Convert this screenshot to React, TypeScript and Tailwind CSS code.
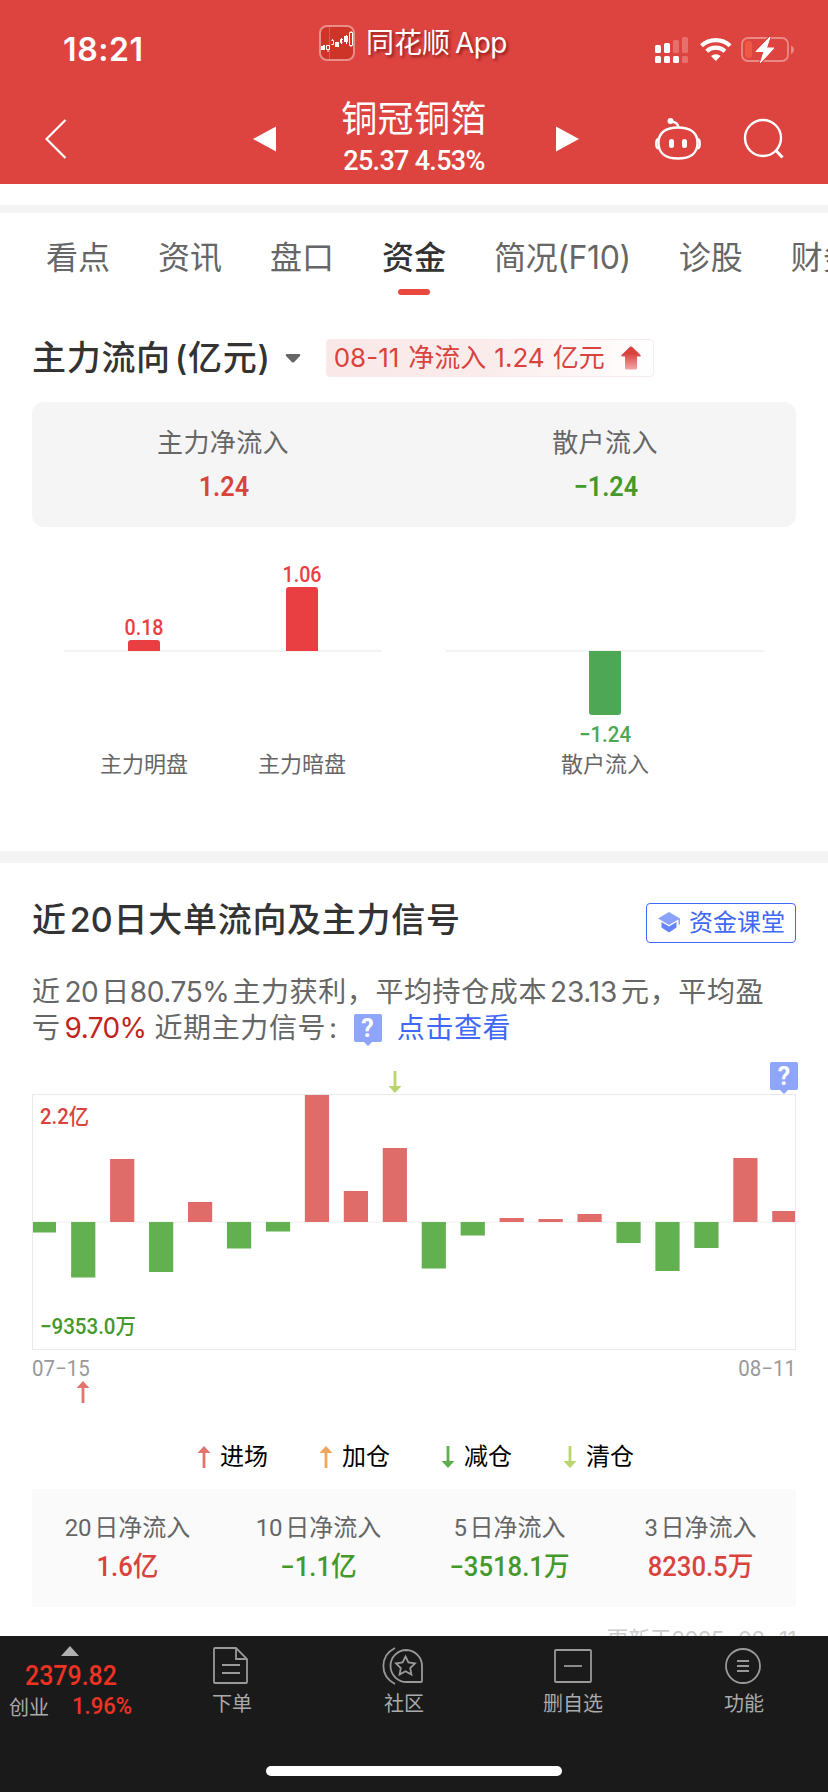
import { useState } from "react";

const din = "font-['Roboto','Noto_Sans_CJK_SC',sans-serif]";

const tabs = ["看点", "资讯", "盘口", "资金", "简况(F10)", "诊股", "财务"];

// net flow per trading day, in chart pixels
const flows = [-10.5, -55.5, 63, -50, 20, -26.5, -9.5, 127, 31, 74, -46.5, -13.5, 4, 3, 8, -21, -49, -26, 64, 11];

const legend = [
  { label: "进场", color: "#e2766f", up: true },
  { label: "加仓", color: "#f2a65a", up: true },
  { label: "减仓", color: "#5fae4d", up: false },
  { label: "清仓", color: "#b9d56b", up: false },
];

const totals = [
  { label: "20", value: "1.6亿", up: true },
  { label: "10", value: "−1.1亿", up: false },
  { label: "5", value: "−3518.1万", up: false },
  { label: "3", value: "8230.5万", up: true },
];

const Arrow = ({ color, up }: { color: string; up: boolean }) => (
  <svg width="14" height="22" viewBox="0 0 14 22" fill={color} className={up ? "shrink-0" : "shrink-0 rotate-180"}>
    <path d="M7 0l6.500 7H8.400v15H5.600V7H.5z" />
  </svg>
);

const HelpTag = () => (
  <span className="relative flex h-7 w-7 shrink-0 items-center justify-center rounded-[2px] bg-[#8fa4fb] font-['Roboto',sans-serif] text-[25px] leading-none font-bold text-white">
    ?
    <svg width="8" height="4" viewBox="0 0 8 4" className="absolute top-7 left-[10px]">
      <path d="M0 0h8L4 4z" fill="#8fa4fb" />
    </svg>
  </span>
);

const StatusBar = () => (
  <div className="flex h-[88px] items-start">
    <div className="w-[319px] pt-[30px] pl-[63px] text-[32px] leading-10 font-semibold tracking-[0.6px]">18:21</div>
    <div className="flex w-[336px] items-center pt-6">
      <svg width="36" height="36" viewBox="0 0 36 36">
        <rect x="1" y="1" width="34" height="34" rx="7" fill="#cf3429" stroke="#e98f8a" strokeWidth="2" />
        <path d="M10.500 2v32" stroke="#dc5a52" strokeWidth="1" />
        <g fill="#fff">
          <path d="M2 21h4v4H2zM4 20h2v1H4zM16 17h4v5h-4zM25 11h4v6h-4zM27 10h1v9h-1z" />
        </g>
        <g fill="none" stroke="#fff" strokeWidth="1">
          <path d="M7.500 20.500h3v4h-3zM9 24v3M12.500 15.500h2v4h-2M13.500 14v2M24 14.500h-2.500v3h2M22.500 13v6M30.500 7.500h3v13h-3zM32 6v2M32 20v2" />
        </g>
      </svg>
      <span className="ml-[11px] pt-px text-[28px] leading-9 [text-shadow:2px_2px_3px_rgba(90,0,0,0.6)]">
        同花顺<span className="ml-[5px] tracking-[-0.6px]">App</span>
      </span>
    </div>
    <svg width="140" height="26" viewBox="0 0 140 26" className="mt-[37px]">
      <g fill="#fff">
        <rect x="0" y="8" width="6" height="8" rx="1.500" />
        <rect x="9" y="6" width="6" height="10" rx="1.500" />
        <rect x="0" y="19" width="6" height="7" rx="1.500" />
        <rect x="9" y="19" width="6" height="7" rx="1.500" />
        <rect x="18" y="19" width="6" height="7" rx="1.500" />
      </g>
      <g fill="#e7706d">
        <rect x="18" y="3" width="6" height="13" rx="1.500" />
        <rect x="27" y="0" width="6" height="16" rx="1.500" />
        <rect x="27" y="19" width="6" height="7" rx="1.500" />
      </g>
      <g fill="none" stroke="#fff" strokeWidth="4.200">
        <path d="M46.500 8.700a21 21 0 0 1 28.600 0" />
        <path d="M51.700 14.200a13.500 13.500 0 0 1 18.200 0" />
      </g>
      <path d="M56 19a7.200 7.200 0 0 1 9.600 0l-4.800 5z" fill="#fff" />
      <rect x="87" y="1" width="46" height="23" rx="6" fill="none" stroke="#ea8a87" strokeWidth="1.800" />
      <path d="M136 8.500c4 1.200 4 7.300 0 8.500z" fill="#ea8a87" />
      <rect x="90" y="4" width="7" height="17" rx="3" fill="#ee5845" />
      <path d="M115 0L101 14.500h8L105.500 25.500 119 11h-7.500z" fill="#fff" stroke="#dd4440" strokeWidth="3" paintOrder="stroke" />
      <path d="M115 0L101 14.500h8L105.500 25.500 119 11h-7.500z" fill="#fff" stroke="#fff" strokeWidth="1" strokeLinejoin="round" />
    </svg>
  </div>
);

const NavBar = () => (
  <div className="flex h-24 items-start">
    <div className="w-[253px] pt-[31px] pl-[45px]">
      <svg width="22" height="40" viewBox="0 0 22 40" fill="none" stroke="#fff" strokeWidth="2.200">
        <path d="M20.500 1L1.500 20l19 19" />
      </svg>
    </div>
    <svg width="23" height="26" viewBox="0 0 23 26" className="mt-[38px]">
      <path d="M0 13L23 .5v25z" fill="#fff" />
    </svg>
    <div className="flex w-[280px] flex-col items-center pt-2 pr-1">
      <div className="text-[36px] leading-[46px] tracking-[0.4px]">铜冠铜箔</div>
      <div className={`${din} mt-[3px] text-[27px] leading-8 font-medium tracking-[-0.7px]`}>25.37 4.53%</div>
    </div>
    <svg width="23" height="26" viewBox="0 0 23 26" className="mt-[38px]">
      <path d="M23 13L0 .5v25z" fill="#fff" />
    </svg>
    <svg width="46" height="42" viewBox="0 0 46 42" fill="none" stroke="#fff" strokeWidth="2.400" className="mt-[30px] ml-[76px]">
      <path d="M23 9.500c12 0 19.500 5 19.500 15.500S35 40.500 23 40.500 3.500 35.500 3.500 25 11 9.500 23 9.500z" />
      <path d="M3.500 21C.5 21.500.5 30 3.500 30.500M42.500 21c3 .5 3 9 0 9.500M15 3.500c5 0 8 2 8.500 6" />
      <circle cx="15.500" cy="3" r="2" fill="#fff" stroke="none" />
      <circle cx="15.500" cy="3" r="1.800" />
      <path d="M16.500 23.500v4M29.500 23.500v4" strokeWidth="5" strokeLinecap="round" />
    </svg>
    <svg width="42" height="42" viewBox="0 0 42 42" fill="none" stroke="#fff" strokeWidth="2.400" className="mt-[30px] ml-[42px]">
      <circle cx="20" cy="20" r="18" />
      <path d="M32.500 32l7 7.500" strokeWidth="3" />
    </svg>
  </div>
);

const MainFlow = () => (
  <section className="px-8">
    <div className="flex h-[38px] items-center">
      <h2 className="text-[34px] leading-[38px] font-medium tracking-[0.7px] whitespace-nowrap text-[#333]">
        主力流向<span className="ml-1">(亿元)</span>
      </h2>
      <svg width="16" height="9" viewBox="0 0 16 9" className="ml-[14px]">
        <path d="M1.500 0h13Q16 .8 15 2L9 8.200q-1 .8-2 0L1 2Q0 .8 1.500 0z" fill="#666" />
      </svg>
      <div className="ml-[25px] flex h-[38px] w-[328px] items-center rounded-[4px] border border-[#fbeaea] bg-gradient-to-r from-[#fae8e8] via-[#fbecec] to-white pl-[7px] text-[26px] leading-9 whitespace-nowrap text-[#d9433e]">
        <span>08-11</span>
        <span className="ml-[9px]">净流入</span>
        <span className="ml-2">1.24</span>
        <span className="ml-2">亿元</span>
        <svg width="20" height="24" viewBox="0 0 20 24" className="ml-4">
          <defs>
            <linearGradient id="inflow" x1="0" y1="0" x2="0" y2="1">
              <stop offset="0.300" stopColor="#d9433e" />
              <stop offset="1" stopColor="#eea9a7" />
            </linearGradient>
          </defs>
          <path d="M9 .8q1-.8 2 0l8.500 8.200q.8 1.300-.6 1.400H16V22q0 1.500-1.500 1.500h-9Q4 23.500 4 22V10.400H1.100Q-.3 10.300.5 9z" fill="url(#inflow)" />
        </svg>
      </div>
    </div>

    <div className="mt-[25px] grid h-[125px] grid-cols-2 rounded-xl bg-[#f5f5f5] pt-[21px] text-center">
      <div>
        <div className="text-[26px] leading-10 tracking-[0.4px] text-[#666]">主力净流入</div>
        <div className={`${din} mt-[6px] scale-x-90 pl-[2px] text-[28px] leading-9 font-semibold text-[#d9433e]`}>1.24</div>
      </div>
      <div>
        <div className="text-[26px] leading-10 tracking-[0.4px] text-[#666]">散户流入</div>
        <div className={`${din} mt-[6px] scale-x-90 pl-[2px] text-[28px] leading-9 font-semibold text-[#43992a]`}>−1.24</div>
      </div>
    </div>

    <svg width="764" height="324" viewBox="32 527 764 324" className={`${din} block text-[22px]`}>
      <path d="M64 651h318M446 651h318" stroke="#f3f3f3" strokeWidth="2" />
      <path d="M128 651v-8q0-3 3-3h26q3 0 3 3v8zM286 651v-61q0-3 3-3h26q3 0 3 3v61z" fill="#ea3f42" />
      <path d="M589 651v61q0 3 3 3h26q3 0 3-3v-61z" fill="#4da755" />
      <g textAnchor="middle" fontWeight="500">
        <text x="144" y="635" textLength="39" lengthAdjust="spacingAndGlyphs" fill="#ea3f42">0.18</text>
        <text x="302" y="582" textLength="39" lengthAdjust="spacingAndGlyphs" fill="#ea3f42">1.06</text>
        <text x="605" y="742" textLength="52" lengthAdjust="spacingAndGlyphs" fill="#4da755">−1.24</text>
      </g>
      <g textAnchor="middle" fill="#666">
        <text x="144" y="772">主力明盘</text>
        <text x="302" y="772">主力暗盘</text>
        <text x="605" y="772">散户流入</text>
      </g>
    </svg>
  </section>
);

const BigOrders = () => (
  <section className="px-8 pt-[35px]">
    <div className="flex h-11 items-center justify-between">
      <h2 className="text-[34px] leading-[44px] font-medium tracking-[0.7px] whitespace-nowrap text-[#333]">
        近<span className="ml-[3px] tracking-normal">20</span><span className="ml-[1px]">日大单流向及主力信号</span>
      </h2>
      <button className="mt-[5px] flex h-10 w-[150px] items-center rounded-[4px] border border-[#3f68f6] pl-[11px] text-[24px] whitespace-nowrap text-[#3f68f6]">
        <svg width="23" height="21" viewBox="0 0 23 21">
          <path d="M11 0l11 6.500v6h-1.500V7.500L11 13 0 6.500z" fill="#8ba2fa" />
          <path d="M3.500 10L11 14.500l7.500-4.500v5.500L11 20.500l-7.500-5z" fill="#6184f8" />
        </svg>
        <span className="ml-[8px] leading-9">资金课堂</span>
      </button>
    </div>

    <div className="mt-[32px] text-[28px] leading-9 whitespace-nowrap text-[#666]">
      <div className="flex tracking-[0.6px]">
        近<span className="ml-1 tracking-[-0.6px]">20</span><span className="ml-[3px]">日</span>
        <span className="tracking-[-0.4px]">80.75%</span><span className="ml-[3px]">主力获利，平均持仓成本</span>
        <span className="ml-[3px] tracking-[-0.2px]">23.13</span><span className="ml-[4px]">元，平均盈</span>
      </div>
      <div className="flex tracking-[0.6px]">
        亏<span className="ml-1 tracking-[-0.6px] text-[#c0241c]">9.70%</span>
        <span className="ml-[8px]">近期主力信号</span><span className="ml-[3px]">:</span>
        <span className="mt-1 ml-[16px]"><HelpTag /></span>
        <span className="ml-[15px] text-[#3f68f6]">点击查看</span>
      </div>
    </div>

    <div className="relative mt-[48px]">
      <div className="absolute -top-[32px] right-[-2px]"><HelpTag /></div>
      <div className="absolute -top-[23px] left-[356px]"><Arrow color="#b9d56b" up={false} /></div>
      <svg width="764" height="256" viewBox="32 1094 764 256" className={`${din} block text-[22px] font-medium`}>
        <path d="M33 1222h763" stroke="#f5f5f5" strokeWidth="1.500" />
        {flows.map((v, i) => (
          <rect
            key={i}
            x={32.2 + i * 38.95 + (i === 0 ? 0.8 : 0)}
            y={v > 0 ? 1222 - v : 1222}
            width={i === 0 ? 23 : 24.2}
            height={Math.abs(v)}
            fill={v > 0 ? "#df6c69" : "#62b050"}
          />
        ))}
        <rect x="32.500" y="1094.500" width="763" height="255" fill="none" stroke="#eaeaea" />
        <text x="40" y="1124" textLength="49" lengthAdjust="spacingAndGlyphs" fill="#d9433e">2.2亿</text>
        <text x="40" y="1334" textLength="96" lengthAdjust="spacingAndGlyphs" fill="#43992a">−9353.0万</text>
      </svg>
      <div className={`${din} flex justify-between pt-1 text-[22px] leading-[30px] text-[#999]`}>
        <span className="origin-left scale-x-[0.93]">07−15</span>
        <span className="origin-right scale-x-[0.93]">08−11</span>
      </div>
      <div className="absolute top-[287px] left-[44px]"><Arrow color="#e2766f" up /></div>
    </div>

    <div className="mt-[55px] flex h-9 items-center gap-[51px] pl-[165px]">
      {legend.map((l) => (
        <div key={l.label} className="flex w-[71px] items-center">
          <Arrow color={l.color} up={l.up} />
          <span className="ml-[9px] text-[24px] leading-9 whitespace-nowrap text-black">{l.label}</span>
        </div>
      ))}
    </div>

    <div className="mt-[14px] grid h-[118px] grid-cols-4 bg-[#fafafa] pt-[21px] text-center">
      {totals.map((t) => (
        <div key={t.label}>
          <div className="text-[24px] leading-9 whitespace-nowrap text-[#666]">
            <span className={`${din} mr-[3px] tracking-[-0.3px]`}>{t.label}</span>日净流入
          </div>
          <div className={`${din} mt-[3px] scale-x-95 text-[27px] leading-9 font-medium whitespace-nowrap ${t.up ? "text-[#d9433e]" : "text-[#43992a]"}`}>{t.value}</div>
        </div>
      ))}
    </div>

    <div className="mt-[14px] text-right text-[22px] leading-9 tracking-[-0.4px] text-[#ccc]">更新于2025−08−11</div>
  </section>
);

const BottomBar = () => (
  <footer className="fixed inset-x-0 bottom-0 h-[156px] bg-[#1a1a1a] text-[20px] whitespace-nowrap text-[#aaa]">
    <div className="flex">
      <div className="flex w-[210px] flex-col pt-[10px]">
        <svg width="18" height="10" viewBox="0 0 18 10" className="ml-[61px]">
          <path d="M9 0l9 10H0z" fill="#b0b0b0" />
        </svg>
        <div className={`${din} mt-[2px] ml-[25px] origin-left scale-x-[0.89] text-[28px] leading-9 font-medium text-[#ef3223]`}>2379.82</div>
        <div className="-mt-[4px] flex items-center pl-[9px] leading-7">
          <span className="mt-[4px]">创业</span>
          <span className={`${din} ml-[23px] origin-left scale-x-[0.92] text-[24px] font-medium text-[#ef3223]`}>1.96%</span>
        </div>
      </div>
      <div className="flex w-[44px] flex-col items-center pt-[11px]">
        <svg width="36" height="38" viewBox="0 0 36 38" fill="none" stroke="#999" strokeWidth="1.800" className="-ml-[4px]">
          <path d="M24 1H3Q2 1 2 2v33q0 1 1 1h31q1 0 1-1V12zM24 1v11h11M10 18h18M10 26h18" />
        </svg>
        <span className="mt-[5px] leading-7">下单</span>
      </div>
      <div className="ml-[127px] flex w-[44px] flex-col items-center pt-[11px]">
        <svg width="42" height="38" viewBox="0 0 42 38" fill="none" stroke="#999" strokeWidth="1.800">
          <path d="M13 1C-2.500 9-2.500 29 13 37" />
          <path d="M24.500 3A16 16 0 1 0 24.500 35H39q1 0 1-1V19A16 16 0 0 0 24.500 3z" />
          <path d="M23.500 9.500l2.900 6 6.600.9-4.800 4.600 1.200 6.500-5.900-3.200-5.900 3.200 1.200-6.500-4.800-4.600 6.600-.9z" />
        </svg>
        <span className="mt-[5px] ml-[2px] leading-7">社区</span>
      </div>
      <div className="ml-[116px] flex w-[64px] flex-col items-center pt-[11px]">
        <svg width="40" height="38" viewBox="0 0 40 38" fill="none" stroke="#999" strokeWidth="1.800">
          <rect x="2" y="3" width="36" height="32" rx="1" />
          <path d="M11 19h18" />
        </svg>
        <span className="mt-[5px] leading-7">删自选</span>
      </div>
      <div className="ml-[119px] flex w-[40px] flex-col items-center pt-[11px]">
        <svg width="38" height="38" viewBox="0 0 38 38" fill="none" stroke="#999" strokeWidth="1.800">
          <circle cx="18" cy="19" r="17" />
          <path d="M12 14h12M12 19h12M12 24h12" />
        </svg>
        <span className="mt-[5px] leading-7">功能</span>
      </div>
    </div>
    <div className="absolute bottom-4 left-[266px] h-[10px] w-[296px] rounded-full bg-white" />
  </footer>
);

const App = () => {
  const [active, setActive] = useState("资金");

  return (
    <main className="h-[1792px] w-[828px] overflow-hidden bg-white font-['Inter','Noto_Sans_CJK_SC',sans-serif]">
      <header className="h-[184px] bg-[#dd4440] text-white">
        <StatusBar />
        <NavBar />
      </header>
      <div className="mt-[21px] h-2 bg-[#f4f4f4]" />

      <nav className="flex h-[126px] gap-12 pl-[46px] text-[32px] leading-[42px] whitespace-nowrap">
        {tabs.map((tab) => (
          <button
            key={tab}
            onClick={() => setActive(tab)}
            className={`flex shrink-0 flex-col items-center pt-6 ${tab === active ? "font-medium text-[#333]" : "text-[#666]"} ${tab.length > 2 ? "tracking-[-0.4px]" : ""}`}
          >
            {tab}
            {tab === active && <span className="mt-[10px] h-[6px] w-8 rounded-full bg-[#e8483d]" />}
          </button>
        ))}
      </nav>

      <MainFlow />
      <div className="h-3 bg-[#f4f4f4]" />
      <BigOrders />
      <BottomBar />
    </main>
  );
};

export default App;
